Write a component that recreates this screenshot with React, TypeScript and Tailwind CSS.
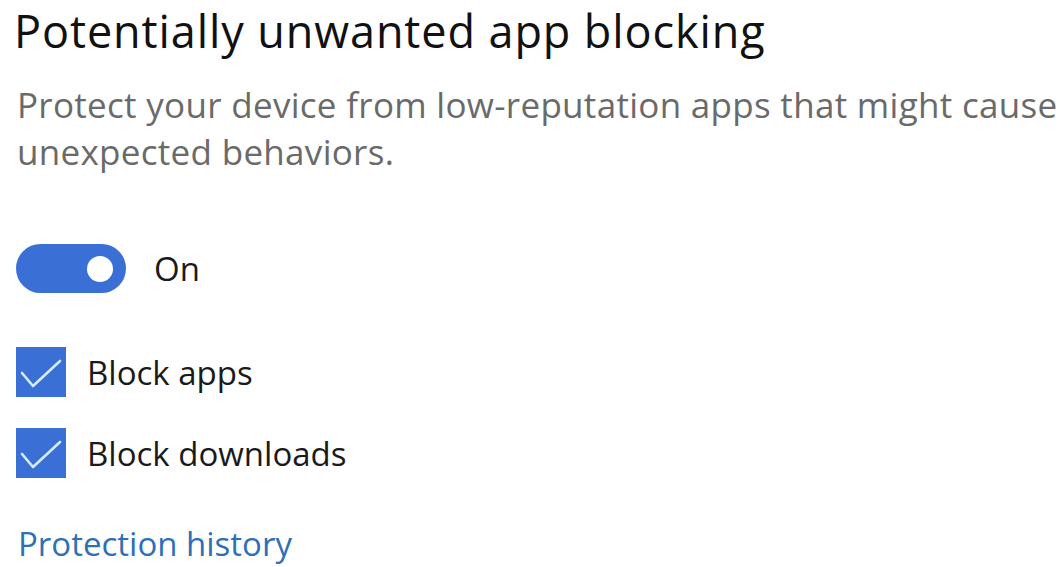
import React from 'react';

function Toggle({ on }: { on: boolean }) {
  return (
    <div className="flex items-center gap-[28px]">
      <div className="flex h-[49px] w-[110px] items-center justify-end rounded-full bg-[#3a6fd5] pr-[13px]">
        <div className="h-[26px] w-[26px] rounded-full bg-white" />
      </div>
      <span className="text-[33px] leading-[45px] text-[#1a1a1a]">{on ? 'On' : 'Off'}</span>
    </div>
  );
}

function Check({ label }: { label: string }) {
  return (
    <div className="flex items-center gap-[21px]">
      <div className="h-[50px] w-[50px] bg-[#3a6fd5]">
        <svg width="50" height="50" viewBox="0 0 50 50" fill="none">
          <path d="M6 26 L17 39 L44 14" stroke="#d3ecff" strokeWidth="2.6" strokeLinecap="round" strokeLinejoin="round" />
        </svg>
      </div>
      <span className="text-[33px] leading-[45px] text-[#1a1a1a]">{label}</span>
    </div>
  );
}

export default function App() {
  return (
    <div className="h-[567px] w-[1061px] overflow-hidden bg-white pl-[14px]" style={{ fontFamily: '"Open Sans", "Noto Sans", sans-serif' }}>
      <h1 className="whitespace-nowrap text-[45px] leading-[62px] tracking-[0.9px] text-[#111]">Potentially unwanted app blocking</h1>
      <p className="mt-[19px] w-[1100px] pl-[3px] text-[35px] leading-[47px] tracking-[0.3px] text-[#6a6a6a]">
        Protect your device from low-reputation apps that might cause
        <br />
        unexpected behaviors.
      </p>
      <div className="mt-[69px] pl-[2px]">
        <Toggle on />
      </div>
      <div className="mt-[54px] flex flex-col gap-[31px] pl-[2px]">
        <Check label="Block apps" />
        <Check label="Block downloads" />
      </div>
      <a className="mt-[43px] block pl-[4px] text-[33px] leading-[45px] text-[#2f6fb8]">Protection history</a>
    </div>
  );
}
